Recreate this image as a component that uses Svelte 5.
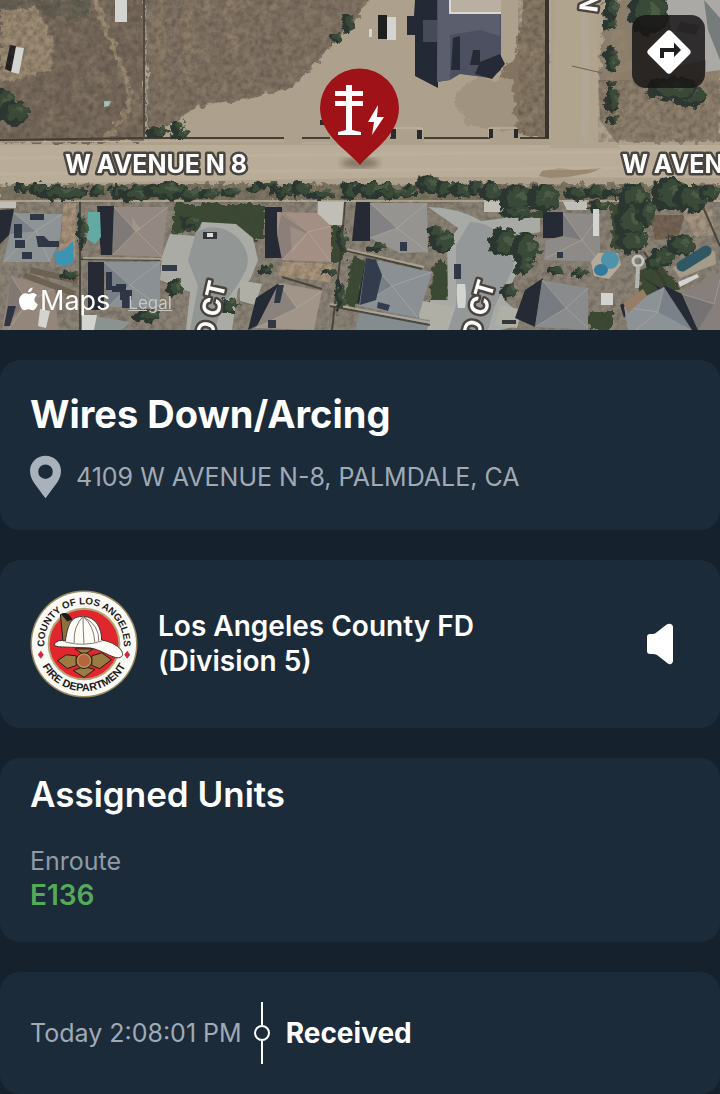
<script>
  const incident = {
    type: 'Wires Down/Arcing',
    address: '4109 W AVENUE N-8, PALMDALE, CA',
    agency: 'Los Angeles County FD (Division 5)'
  };
  const units = [{ status: 'Enroute', name: 'E136' }];
  const events = [{ time: 'Today 2:08:01 PM', label: 'Received' }];

  // cx, cy, rx, ry of the tree canopies
  const trees = [
    [4, 103, 12, 16], [16, 112, 15, 12], [348, 22, 6, 10], [336, 38, 5, 6], [160, 132, 12, 5], [178, 125, 6, 7], [182, 134, 9, 4],
    [612, 8, 7, 12], [611, 24, 6, 5], [612, 52, 7, 6], [613, 63, 6, 9], [612, 83, 4, 5], [613, 100, 7, 12], [613, 120, 4, 6],
    [690, 94, 18, 12], [674, 88, 26, 12], [650, 12, 20, 22],
    [24, 187, 9, 5], [46, 189, 17, 6], [64, 192, 24, 7], [98, 190, 8, 6], [120, 191, 9, 8], [138, 193, 16, 8], [168, 190, 24, 9], [190, 194, 14, 6], [210, 193, 9, 4], [232, 192, 10, 5],
    [254, 188, 6, 5], [268, 184, 10, 4], [285, 190, 12, 7], [302, 188, 10, 8], [322, 194, 14, 4], [352, 190, 11, 9], [376, 189, 22, 8], [410, 188, 4, 5], [430, 184, 13, 10], [447, 188, 12, 9], [462, 190, 10, 8], [476, 187, 6, 8], [395, 193, 24, 5],
    [492, 191, 12, 9], [518, 198, 18, 14], [545, 197, 16, 14], [516, 212, 14, 6], [580, 193, 14, 6], [598, 191, 12, 6], [618, 192, 14, 6],
    [635, 198, 14, 16], [632, 220, 16, 19], [634, 241, 15, 12], [647, 212, 9, 14], [672, 194, 20, 17], [692, 197, 16, 14], [712, 192, 12, 7], [600, 205, 10, 6],
    [506, 242, 15, 15], [527, 248, 14, 16], [524, 265, 8, 10], [664, 256, 13, 9], [682, 244, 15, 11], [654, 262, 8, 7],
    [443, 240, 13, 11], [437, 231, 8, 6], [379, 247, 9, 5], [175, 288, 8, 8], [70, 275, 9, 4], [148, 315, 12, 7], [82, 231, 3, 20],
    [192, 222, 10, 6], [229, 304, 9, 7], [268, 269, 7, 3], [330, 272, 7, 3], [510, 290, 9, 7], [342, 238, 3, 12], [340, 296, 3, 18], [580, 272, 8, 4], [556, 270, 7, 4]
  ];

  // roofs: outline, ridge lines and shaded slope
  const roofs = [
    { o: '114,207 168,207 162,257 113,255', r: 'M114 207 136 231 168 207M136 231 113 255M136 231 162 257', s: '114,207 136,231 113,255', c: '#938982' },
    { o: '104,262 160,262 160,307 108,307', r: 'M104 262 130 285 160 262M130 285 108 307M130 285 160 307', s: '104,262 130,285 108,307', c: '#8b9095' },
    { o: '14,213 62,214 60,239 50,262 3,262 10,234', r: 'M14 213 36 231 62 214M36 231 3 262M36 231 50 262', s: '14,213 36,231 10,234', c: '#8e9396' },
    { o: '11,276 55,288 58,330 2,330', r: 'M11 276 28 302 55 288M28 302 8 330', s: '11,276 28,302 5,325', c: '#95867b' },
    { o: '277,212 317,213 331,226 331,262 282,260 277,234', r: 'M282 214 308 232 331 226M308 232 282 260M308 232 331 262', s: '282,212 308,232 282,260 277,234', c: '#a38f83' },
    { o: '279,283 322,291 314,330 256,328', r: 'M279 283 297 308 322 291M297 308 256 328', s: '279,283 297,308 256,328', c: '#a19488' },
    { o: '370,203 427,203 428,252 400,253 370,238', r: 'M370 203 397 228 427 203M397 228 370 238M397 228 428 252', s: '370,203 397,228 370,238', c: '#969491' },
    { o: '366,258 432,272 418,318 359,306', r: 'M366 258 392 286 432 272M392 286 359 306M392 286 418 318', s: '366,258 392,286 359,306', c: '#8b9095' },
    { o: '360,310 430,320 427,330 355,330', r: '', s: '', c: '#858c8f' },
    { o: '563,213 600,214 600,262 544,260 546,240 563,236', r: 'M563 213 582 240 600 214M582 240 546 258M582 240 600 262', s: '563,213 582,240 563,236', c: '#8d8a88' },
    { o: '542,280 588,288 588,330 535,327', r: 'M542 280 566 308 588 288M566 308 535 327M566 308 588 328', s: '542,280 566,308 535,327', c: '#898b8d' },
    { o: '624,307 664,287 692,330 628,330', r: 'M624 307 658 312 664 287M658 312 636 330', s: '658,312 664,287 692,330', c: '#8c9296' },
    { o: '682,294 720,272 720,330 698,330', r: 'M682 294 714 304 720 280', s: '682,294 714,304 698,330', c: '#867f7b' },
    { o: '82,314 130,322 122,330 82,330', r: '', s: '', c: '#8b928f' }
  ];
</script>

<div class="page">
  <section class="map" aria-label="Incident map">
    <svg class="aerial" viewBox="0 0 720 330" preserveAspectRatio="xMidYMid slice" role="img" aria-label="Aerial view of W Avenue N 8">
      <defs>
        <filter id="rough" x="0" y="0" width="720" height="330" filterUnits="userSpaceOnUse" color-interpolation-filters="sRGB">
          <feTurbulence type="fractalNoise" baseFrequency="0.13" numOctaves="3" seed="4" result="n" />
          <feDisplacementMap in="SourceGraphic" in2="n" scale="11" xChannelSelector="R" yChannelSelector="G" />
        </filter>
        <filter id="grain" x="0" y="0" width="720" height="330" filterUnits="userSpaceOnUse" color-interpolation-filters="sRGB">
          <feTurbulence type="fractalNoise" baseFrequency="0.18" numOctaves="3" seed="9" />
          <feColorMatrix values="0 0 0 0 0.26  0 0 0 0 0.23  0 0 0 0 0.21  1.4 1 0 0 -0.95" />
          <feComposite in2="SourceGraphic" operator="in" />
        </filter>
        <filter id="light" x="0" y="0" width="720" height="330" filterUnits="userSpaceOnUse" color-interpolation-filters="sRGB">
          <feTurbulence type="fractalNoise" baseFrequency="0.07" numOctaves="4" seed="21" />
          <feColorMatrix values="0 0 0 0 0.66  0 0 0 0 0.59  0 0 0 0 0.49  0 2 1 0 -1.3" />
          <feComposite in2="SourceGraphic" operator="in" />
        </filter>
        <filter id="soft"><feGaussianBlur stdDeviation="3" /></filter>
      </defs>
      <rect width="720" height="330" fill="#ada08c" />
      <g filter="url(#rough)">
        <path d="M-5-5H145V142H-5Z" fill="#746759" />
        <path d="M0 10 35 8 54 40 50 70 0 85Z" fill="#9a8972" />
        <path d="M0 0H90V18H50L35 8H0Z" fill="#605c50" />
        <path d="M95 0 108 35 126 75 130 105 105 142" stroke="#988770" stroke-width="5" fill="none" />
        <path d="M146-5H370L355 22 330 48 292 88 240 100 198 107 148 138Z" fill="#7e7061" />
        <path d="M160 0V85M188 0V75M230 0V40" stroke="#918069" stroke-width="8" fill="none" opacity=".5" />
        <path d="M525-5H548V136H518L505 110 500 75 515 55Z" fill="#827461" />
        <path d="M605 0H720V142H612L595 125Z" fill="#8b7d6b" />
        <path d="M460 88 480 78 512 80 516 132 470 126 455 104Z" fill="#a09481" />
      </g>
      <path d="M0 0H370L292 88 198 107 148 138H0ZM518 0H548V136H518ZM612 30H720V142H598Z" filter="url(#light)" opacity=".4" />
      <path d="M0 145H720V178L440 177 0 184Z" fill="#b9ad99" />
      <path d="M555 0H595L600 120 620 148H550Z" fill="#b1a48f" />
      <path d="M582 5 588 70 584 140" stroke="#afaa9f" stroke-width="12" fill="none" opacity=".45" filter="url(#soft)" />
      <path d="M539 176 542 171 560 168 575 170 602 168 590 173 568 177 550 178Z" fill="#927c66" opacity=".75" />
      <path d="M0 158 720 151M0 174 720 167" stroke="#c3b7a4" stroke-width="3" opacity=".4" />
      <path d="M0 140 145 138 200 138H284M302 138H330M390 138H396M424 138H490M520 138H549" stroke="#463e35" stroke-width="2" fill="none" />
      <path d="M0 142 200 141H284M302 143H330M424 141H490" stroke="#bfb39d" fill="none" />
      <path d="M144 0V138" stroke="#514c43" stroke-width="2" />
      <path d="M547 0V138" stroke="#38322e" stroke-width="4" />
      <path d="M550 0V138" stroke="#b8ab97" />
      <path d="M572 66 602 73" stroke="#6b6052" />
      <path d="M396 130V128H422V138M489 138V128H517V138" stroke="#c5baa7" fill="none" />
      <path d="M391 129h5v9h-5ZM417 130h5v9h-5ZM489 129h4v9h-4ZM514 129h4v9h-4ZM320 120h5v5h-5Z" fill="#292a2c" />

      <path d="M415 0H438V88L415 76V35H407V16H414Z" fill="#242936" />
      <path d="M423 20H437V42H423Z" fill="#464b5a" />
      <path d="M437 0H501V70L490 78 460 74 450 80 437 82Z" fill="#4d5060" />
      <path d="M438 0H450V13H500V36L480 30 450 35 450 80 437 82Z" fill="#5b5e6c" />
      <path d="M453 38 460 36V70H451ZM473 50h7v15h-10ZM480 62 500 54 505 64 492 79 475 74Z" fill="#252b36" />
      <path d="M450 0H501V13H450Z" fill="#b9b0a1" />
      <path d="M450 0V13H501" stroke="#ddd8ce" stroke-width="2" fill="none" />
      <path d="M378 15h9v24h-9ZM10 45l6 1-4 26-7-3Z" fill="#201f20" />
      <path d="M104 101h7l-2 5-5 1Z" fill="#aac0bd" />
      <path d="M664 0H720V70L706 72V60L678 66 672 30Z" fill="#aaa9a5" />
      <path d="M704 0 720 18V60L708 30ZM680 22l20 3-4 10-20-4Z" fill="#767c7b" />

      <path d="M0 201H720V330H0Z" fill="#8a8275" />
      <path d="M0 184H720V202H0Z" fill="#7d7562" filter="url(#rough)" />
      <g filter="url(#rough)" fill="#3b4a33">
        <path d="M173 204H265V240H240L220 226 173 234Z" />
        <path d="M331 226H345V262H331ZM352 255 366 260 356 308 344 304ZM433 262H448V302H430ZM500 212H545V218H500ZM610 202H640V250H612ZM639 270 660 262 680 288 640 302ZM588 310H613V330H588Z" />
      </g>
      <path d="M650 215H685L678 238 655 240Z" fill="#756353" />
      <path d="M680 209H712L714 235 695 237Z" fill="#a59480" />
      <path d="M63 203 76 203 75 260 56 268 62 235ZM283 262 332 264 330 282 278 276Z" fill="#a8937b" />
      <path d="M0 184H720V330H0Z" filter="url(#grain)" opacity=".4" />
      <path d="M170 234 195 236 202 222 236 224 253 238 258 260 250 280 238 289 232 330H186L190 292 160 280 162 256Z" fill="#aaaba5" />
      <path d="M196 232Q218 220 238 238Q252 254 246 270Q236 290 222 305L215 330H190L198 286 188 260Z" fill="#929694" />
      <path d="M428 207Q460 208 481 221L505 218 540 218V232L505 238 522 262 504 300 518 312V326L500 330H432L430 300 448 300 447 245 458 228Z" fill="#a8aaa6" />
      <path d="M470 222Q490 222 506 240L514 266 495 306 488 330H448L456 306 456 245Z" fill="#949898" />
      <path d="M418 300 455 307 448 330H420ZM500 305 522 310 517 328 495 325ZM240 280 262 284 255 305 240 301Z" fill="#b0afa6" />
      <path d="M318 201h26v24h-15l-12-3ZM484 198h20v14h-20ZM562 200h25v10h-20ZM0 201h16v7H0Z" fill="#c0beb7" />
      <path d="M97 206 114 206 112 255 101 255ZM265 207H282V258H265ZM256 298 279 283 272 318 248 330ZM356 202H370V241H352ZM0 210 14 209 9 235 0 244ZM88 262H104V310H88ZM543 212H563V238H543ZM525 290 543 278 535 327 515 318ZM640 276 655 286 700 330H692L664 290ZM366 258 378 260 362 307 357 303ZM620 305 640 295 624 318ZM663 285 682 294 698 330 688 330Z" fill="#252a34" />
      <g>
        {#each roofs as roof}
          <polygon points={roof.o} fill={roof.c} />
          <polygon points={roof.s} fill="#3d4657" opacity=".22" />
          <path d={roof.r} stroke="#c2bbb0" stroke-opacity=".4" fill="none" />
        {/each}
      </g>
      <path d="M30 214h14v6H30ZM14 224h8v14h-8ZM36 236h8l5 5h10v6H38ZM15 240h10v8H15ZM22 252h10v7H22ZM106 272h6v18h-6ZM116 284h10v6h6v10h-12v-8h-8v-6h4ZM122 298h8v10h-8ZM162 265h15v6h-15ZM8 306h8l-6 20H4ZM400 242h7v9h-7ZM557 252h6v6h-6ZM277 285h7l-4 18h-6ZM268 320h8v8h-8ZM454 264h7v15h-7Z" fill="#222a3b" opacity=".88" />
      <path d="M366 258 376 260 382 275 376 300 360 305ZM378 302 390 305 388 311 377 308Z" fill="#333c4d" />
      <path d="M132 217 141 230 133 231M290 226 308 234 292 253Z" fill="#bca999" opacity=".35" />
      <path d="M88 212h12l1 25-6 7-8-5Z" fill="#63aaa5" />
      <path d="M54 253 64 250 73 241 74 262 64 266 56 264Z" fill="#3b94b3" />
      <path d="M598 253h20l3 12-12 14-15-3-3-14Z" fill="#b3aa99" />
      <circle cx="610" cy="260" r="9" fill="#4f93aa" />
      <ellipse cx="601" cy="270" rx="7" ry="6" fill="#35799a" />
      <path d="M673 268 704 246 715 252 716 264 680 278Z" fill="#a49b89" />
      <path d="M682 266 706 251" stroke="#305766" stroke-width="11" stroke-linecap="round" />
      <circle cx="638" cy="261" r="5" fill="none" stroke="#c3c5c1" stroke-width="3" />
      <path d="M638 266 637 288" stroke="#b3b6b0" stroke-width="4" />
      <path d="M623 303 643 289 647 296 628 313Z" fill="#967d67" />
      <path d="M80 201V330M345 202 340 260 332 330M79 259 160 260M344 250 422 269M282 277 322 289M330 306 430 325M644 252 667 286M700 200 720 246" stroke="#383830" stroke-width="2" fill="none" opacity=".8" />
      <path d="M0 201H720M83 258 165 259M346 249 424 267M330 304 432 323" stroke="#b5aa97" stroke-width="2" fill="none" opacity=".8" />
      <path d="M30 270 78 281M24 275 75 294" stroke="#6d6152" stroke-width="6" />
      <path d="M203 232h14v7h-14ZM502 320h14v4h-14Z" fill="#33373a" />
      <path d="M207 233h6v4h-6Z" fill="#dddedc" />
      <g filter="url(#rough)">
        {#each trees as [x, y, rx, ry]}
          <ellipse cx={x - 2} cy={y + 1} {rx} {ry} fill="#2b3630" />
          <ellipse cx={x + 2} cy={y} rx={rx * 0.75} ry={ry * 0.75} fill="#3a4a38" />
          <ellipse cx={x + 4} cy={y - 2} rx={rx * 0.3} ry={ry * 0.3} fill="#4c5b45" />
        {/each}
      </g>
      <path d="M0 0H370L292 88 198 107 148 138H0ZM518 0H548V136H518ZM598 80H720V142H598Z" filter="url(#grain)" opacity=".45" />
      <path d="M387 17h9v23h-9ZM16 47l8 1-5 26-8-2ZM115 0h12v22h-12ZM369 29h3v8h-3ZM678 282 697 274 699 277 680 287ZM601 293h12v12h-12ZM457 284h8q2 14 0 24h-7q-2-10-1-24ZM82 315h15l-3 15H82ZM593 209h6v27h-6ZM40 309l10 2-4 17-8-2Z" fill="#d3d3d0" />

      <g class="street">
        <text x="65" y="173">W AVENUE N 8</text>
        <text x="622" y="173">W AVENUE N 8</text>
        <text transform="translate(213 341) rotate(-77)">D CT</text>
        <text transform="translate(479 340) rotate(-74)">D CT</text>
        <text transform="translate(597 13) rotate(-82)">N 42ND ST</text>
      </g>

      <ellipse cx="360" cy="163" rx="19" ry="5" fill="#5e5346" opacity=".65" filter="url(#soft)" />
      <path d="M360 165C351 153 320 136 320 108a39.500 39.500 0 0 1 79 0C399 136 369 153 360 165Z" fill="#9f1218" />
      <path d="M346 85h6v6h11v5h-11v5h11v5h-11v24l9 2v3h-23v-3l8-2v-24h-11v-5h11v-5h-11v-5h11ZM378 105 368 122h6l-2 13 12-18h-7Z" fill="#fff" />
    </svg>

    <div class="attribution">
      <svg class="apple" viewBox="0 0 20 24" aria-hidden="true">
        <path d="M14.200 0C14.400 2.500 12.200 5.100 9.600 5 9.300 2.500 11.700.2 14.200 0ZM18.900 8.100C14.900 10.600 15.600 15.700 19.800 17.400 18.800 20.200 16.800 23.700 14.500 23.800 12.700 23.900 12.200 22.800 10.100 22.800 8 22.800 7.500 23.800 5.800 23.900 2.500 24-2.500 14.500 1.500 9 3 6.700 5.200 5.700 7.200 5.900 8.500 6 9.600 6.800 10.400 6.800 11.200 6.800 12.800 5.700 14.800 5.800 16.500 5.900 18 6.700 18.900 8.100Z" fill="currentColor" />
      </svg>
      <span class="brand">Maps</span>
      <a class="legal" href="#legal">Legal</a>
    </div>

    <button class="directions" aria-label="Directions">
      <svg viewBox="0 0 44 44" aria-hidden="true">
        <path d="M19.500 1.500Q22-1 24.500 1.500L42.500 19.500Q45 22 42.500 24.500L24.500 42.500Q22 45 19.500 42.500L1.500 24.500Q-1 22 1.500 19.500Z" fill="#fff" />
        <path d="M13 28V18h14v-5.500L34 20l-7 7v-5H17v6Z" fill="#211f1d" />
      </svg>
    </button>
  </section>

  <main>
    <section class="card incident">
      <h1>{incident.type}</h1>
      <div class="address">
        <svg class="pin" viewBox="0 0 32 46" aria-hidden="true">
          <path d="M16 1C7 1 0 8 0 16.500 0 26 6 31 16 45 26 31 32 26 32 16.500 32 8 25 1 16 1Zm0 9a7.500 7.500 0 1 1 0 15 7.500 7.500 0 0 1 0-15Z" fill="currentColor" fill-rule="evenodd" />
        </svg>
        <span>{incident.address}</span>
      </div>
    </section>

    <section class="card agency">
      <svg class="emblem" viewBox="0 0 110 110" role="img" aria-label="County of Los Angeles Fire Department emblem">
        <defs>
          <path id="arcTop" d="M17 69A40.500 40.500 0 1 1 93 69" />
          <path id="arcBottom" d="M7 55A48 48 0 0 0 103 55" />
        </defs>
        <circle cx="55" cy="55" r="54.500" fill="#9b8b60" />
        <circle cx="55" cy="55" r="53" fill="#fbfaf5" />
        <circle cx="55" cy="55" r="37" fill="#b4a375" />
        <circle cx="55" cy="55" r="35" fill="#e1262d" />
        <g class="seal">
          <text class="upper"><textPath href="#arcTop" startOffset="50%">COUNTY OF LOS ANGELES</textPath></text>
          <text><textPath href="#arcBottom" startOffset="50%">FIRE DEPARTMENT</textPath></text>
        </g>
        <path d="M11 62l3 4-3 4-3-4ZM99 62l3 4-3 4-3-4Z" fill="#d3273e" />
        <path d="M31 25Q38 21 43 31L39 55 34 57Z" fill="#8d713c" stroke="#231c18" />
        <path d="M32 25Q38 20 43 30L38 32Z" fill="#1e1b1b" />
        <path d="M25 55Q28 50 36 52C39 32 43 27 54 27 68 27 73 40 73 51 86 53 96 61 94 67 89 74 75 61 61 59L33 58Q24 58 25 55Z" fill="#fffdf8" stroke="#3b3430" />
        <path d="M36 53Q55 58 73 52M54 27Q44 37 45 54M54 27Q54 40 55 55M54 27Q65 36 66 53M54 27Q71 36 70 52" fill="none" stroke="#81776d" />
        <path d="M46 60 64 60 55 66ZM37 66 47 67 47 77 38 80 28 72ZM63 67 73 64 83 71 71 80 63 77ZM44 82 55 78 66 81 55 89Z" fill="#9a7b42" stroke="#241c18" />
        <circle cx="55" cy="72" r="8" fill="#b99055" stroke="#2b211b" />
        <circle cx="55" cy="72" r="6" fill="#b5663f" />
      </svg>
      <h2>{incident.agency}</h2>
      <button class="sound" aria-label="Play audio">
        <svg viewBox="0 0 28 42" aria-hidden="true">
          <path d="M4 11H7Q9 11 11 9L20 2Q23 0 25 1 27 2 27 4V38Q27 40 25 41 23 42 20 39L11 32Q9 31 7 31H4Q1 31 1 28V14Q1 11 4 11Z" fill="#fff" />
        </svg>
      </button>
    </section>

    <section class="card units">
      <h2>Assigned Units</h2>
      <dl>
        {#each units as unit}
          <dt>{unit.status}</dt>
          <dd>{unit.name}</dd>
        {/each}
      </dl>
    </section>

    <section class="card timeline">
      {#each events as event}
        <time>{event.time}</time>
        <span class="marker" aria-hidden="true"><i></i><b></b><i></i></span>
        <strong>{event.label}</strong>
      {/each}
    </section>
  </main>
</div>

<style>
  :global(body) { background: #15212d; }
  .page { font-family: Inter, "Liberation Sans", sans-serif; color: #fff; background: #15212d; }
  .page * { box-sizing: border-box; }
  h1, h2, dl, dd { margin: 0; }
  button { border: 0; padding: 0; background: none; cursor: pointer; }
  svg { display: block; }

  .map { position: relative; overflow: hidden; aspect-ratio: 24 / 11; }
  .aerial { width: 100%; height: 100%; }
  .street { font-size: 25px; font-weight: 700; fill: #fff; stroke: #4a443f; stroke-width: 5px; stroke-linejoin: round; paint-order: stroke; }
  .attribution { position: absolute; left: 19px; bottom: 11px; display: flex; align-items: center; line-height: 32px; }
  .apple { width: 19px; height: 24px; margin-bottom: 4px; }
  .brand { font-size: 27px; margin-left: 2px; }
  .legal { margin: 4px 0 0 18px; font-size: 17px; color: #c6c6c3; }
  .directions { position: absolute; top: 15px; right: 15px; width: 73px; height: 73px; border-radius: 14px; background: rgb(24 22 21 / 84%); display: grid; place-items: center; }
  .directions svg { width: 44px; height: 44px; }

  main { display: flex; flex-direction: column; gap: 30px; padding-top: 30px; }
  .card { background: #1c2b3a; border-radius: 20px; padding: 30px; }
  h1 { font-size: 38px; line-height: 48px; font-weight: 700; }
  .address { display: flex; align-items: center; gap: 15px; margin-top: 16px; color: #a0aab4; font-size: 25px; line-height: 32px; }
  .pin { width: 31px; height: 46px; flex: none; color: #a9b1bb; }

  .agency { display: flex; align-items: center; gap: 20px; }
  .emblem { width: 108px; height: 108px; flex: none; }
  .seal { font-size: 11px; font-weight: 700; fill: #1c1b1c; text-anchor: middle; font-family: "Liberation Sans", sans-serif; }
  .seal .upper { font-size: 10px; }
  .agency h2 { flex: 1; max-width: 360px; font-size: 28px; line-height: 35px; font-weight: 600; }
  .sound { margin-left: auto; padding: 0 16px; }
  .sound svg { width: 28px; height: 42px; }

  .units { padding-top: 14px; }
  .units h2 { font-size: 35px; line-height: 44px; font-weight: 600; }
  dl { margin-top: 28px; line-height: 34px; }
  dt { font-size: 25px; color: #909ba7; }
  dd { font-size: 28px; font-weight: 600; color: #55aa57; }

  .timeline { display: flex; align-items: center; }
  time { font-size: 25px; color: #a0aab4; }
  .marker { display: flex; flex-direction: column; align-items: center; height: 62px; margin: 0 16px 0 12px; }
  .marker i { flex: 1; width: 2px; background: #fff; }
  .marker b { width: 16px; height: 16px; border: 2px solid #fff; border-radius: 50%; }
  strong { font-size: 28px; font-weight: 700; }
</style>
